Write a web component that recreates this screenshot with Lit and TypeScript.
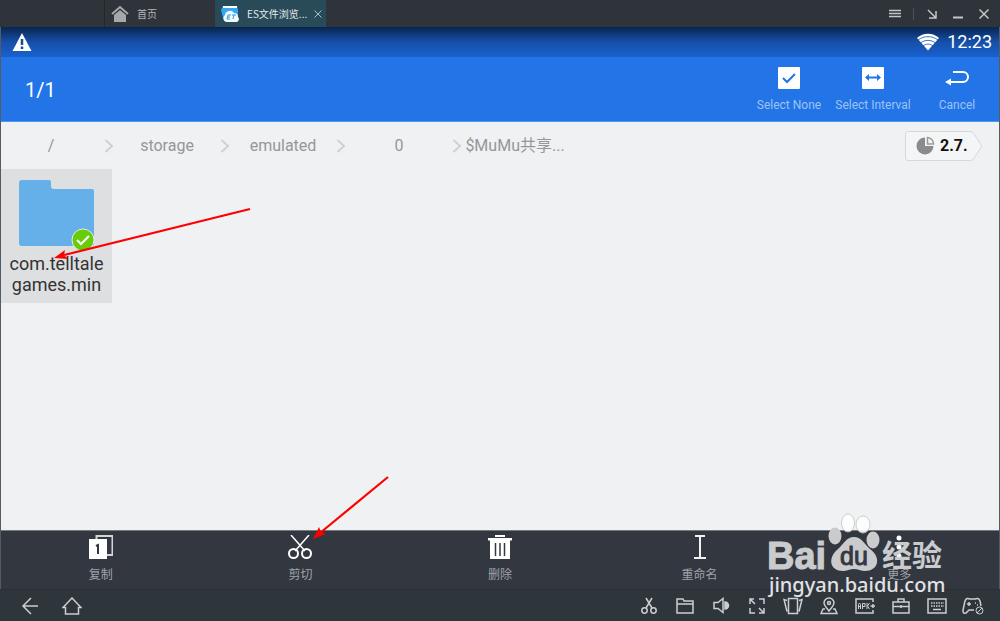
import { LitElement, html, svg, css } from "lit";
import { customElement } from "lit/decorators.js";

const glyphs = {
  home: svg`<path d="M1 9 9 2l8 7" fill="none" stroke="#a6a9ab" stroke-width="2"/><path d="M3 10 9 5l6 5v7H3z" fill="#a6a9ab"/>`,
  back: svg`<path d="M17 9H2M10 1 2 9l8 8"/>`,
  house: svg`<path d="M1 10.500 10 1l9 9.500h-2.500V17h-13v-6.500z"/>`,
  cut: svg`<path d="M5 1l6 10M11 1 5 11"/><circle cx="3.500" cy="13.500" r="2.700"/><circle cx="12.500" cy="13.500" r="2.700"/>`,
  folder: svg`<path d="M1 2h6l1 2h9v12H1zM1 7h16"/>`,
  sound: svg`<path d="M2 5.500h4l5-4v14l-5-4H2z"/><path d="M13 5a3.500 3.500 0 0 1 0 7z" fill="#ccced0"/>`,
  expand: svg`<path d="M2 7V2h4M2 2l5 5M11 2h5v5M2 11v5h5M16 11v5h-5M16 16l-5-5"/>`,
  shake: svg`<path d="M5.500 1.500h9v15h-9zM4 3.500 1 2.500l3 12M16 3.500l3-1-3 12"/>`,
  pin: svg`<path d="M9 14C6 10 4 8.500 4 6a5 5 0 0 1 10 0c0 2.500-2 4-5 8zM5 12H3l-2 4.500h16L15 12h-2"/><circle cx="9" cy="6" r="1.500"/>`,
  apk: svg`<path d="M18 5V2H1v14h17v-3M15.500 9H20M18 7v4"/><path stroke-width="1" d="M3.500 12V7.500l1-1.500 1 1.500V12M3.500 9.500h2M7.500 12V6.500h2.500v3H7.500M12 6v6M14.500 6 12.500 9l2 3"/>`,
  case: svg`<path d="M1 5h16v11H1zM6 5V2h6v3M1 9.500h16M9 8v3"/>`,
  keys: svg`<path d="M1 2h18v14H1z"/><path d="M4 6h13M4 9h13" stroke-dasharray="1.500 1"/><path d="M6 12.500h8"/>`,
  pad: svg`<path d="M12 13H7l-3 3c-3 1-3-1-3-3L3 4c1-3 3-3 5-2h5c2-1 4-1 5 2l1 5M5 7h4M7 5v4M13 6h1M15 8h1"/><circle cx="17.500" cy="13.500" r="3.500" stroke-width="1"/><path stroke-width="1" d="M15 16l5-5"/>`,
};

const icon = (name: keyof typeof glyphs, w = 18) =>
  html`<svg class="line" width=${w} height="18" viewBox="0 0 ${w} 18" aria-hidden="true">${glyphs[name]}</svg>`;

@customElement("window-bar")
class WindowBar extends LitElement {
  static styles = css`
    :host { display: flex; height: 27px; background: #2e343a; color: #b4b7ba; font: 10px/16px "Noto Sans CJK SC", sans-serif; }
    button { font: inherit; color: inherit; background: none; border: 0; padding: 0; display: flex; align-items: center; }
    .tabs { display: flex; margin-left: 104px; }
    .home { width: 111px; padding-left: 6px; gap: 8px; border-left: 1px solid #22272c; }
    .line { fill: none; }
    .active { display: flex; align-items: center; width: 111px; padding: 0 3px 0 6px; gap: 6px; background: #294b59; color: #e4eaed; box-sizing: border-box; }
    .name { flex: 1; white-space: nowrap; }
    .controls { display: flex; align-items: center; margin-left: auto; padding-right: 10px; gap: 14px; }
    .rule { width: 1px; height: 12px; background: #4b5157; margin: 0 -2px; }
    svg { display: block; flex: none; }
  `;
  render() {
    return html`
      <nav class="tabs">
        <button class="home">${icon("home")}<span>首页</span></button>
        <div class="active">
          <svg width="20" height="18" viewBox="0 0 20 18" aria-hidden="true">
            <path d="M2 1h14l1 4v11H3L0 5z" fill="#35a8f4"/><path d="M2 1h14v2H2z" fill="#fff"/>
            <path d="M5 17a4 4 0 0 1-1-7 5 5 0 0 1 9-2 4 4 0 0 1 4 4 3 3 0 0 1-1 5z" fill="#f3f8fb"/>
            <path d="M10 10H7l-1 4h3M7 12h2M11 10h4M13 10l-1 4" fill="none" stroke="#299de9"/>
          </svg>
          <span class="name">ES文件浏览...</span>
          <button aria-label="Close tab"><svg width="10" height="10" viewBox="0 0 10 10"><path d="M1.500 1.500l7 7M8.500 1.500l-7 7" stroke="#b2bdc2" fill="none"/></svg></button>
        </div>
      </nav>
      <div class="controls">
        <button aria-label="Menu"><svg width="12" height="12" viewBox="0 0 12 12"><path d="M0 2.500h12M0 5.500h12M0 8.500h12" stroke="#c4c6c8" stroke-width="1.500"/></svg></button>
        <span class="rule"></span>
        <button aria-label="Dock"><svg width="12" height="12" viewBox="0 0 12 12"><path d="M2 2l8 8M10 3v7H3" stroke="#c4c6c8" stroke-width="1.500" fill="none"/></svg></button>
        <button aria-label="Minimize"><svg width="12" height="12" viewBox="0 0 12 12"><path d="M1 9.500h10" stroke="#c4c6c8" stroke-width="2"/></svg></button>
        <button aria-label="Close"><svg width="12" height="12" viewBox="0 0 12 12"><path d="M1.500 1.500l9 9M10.500 1.500l-9 9" stroke="#c4c6c8" stroke-width="1.500"/></svg></button>
      </div>`;
  }
}

@customElement("file-header")
class FileHeader extends LitElement {
  static styles = css`
    :host { display: block; color: #fff; font-family: Roboto, sans-serif; }
    .status { display: flex; align-items: center; height: 30px; padding: 0 7px 0 11px; gap: 8px; background: linear-gradient(#08244f, #1650a8 50%, #1861cf); }
    .time { font-size: 18px; line-height: 30px; }
    .wifi { margin-left: auto; }
    .bar { display: flex; align-items: center; height: 64px; background: #2374e7; border-bottom: 1px solid #4b97f4; }
    .count { flex: 1; padding: 2px 0 0 24px; font-size: 20px; line-height: 32px; }
    button { width: 84px; padding: 1px 0 0; border: 0; background: none; color: #9dc3f7; font: 12px/16px Roboto, sans-serif; white-space: nowrap; display: flex; flex-direction: column; align-items: center; gap: 8px; }
  `;
  render() {
    return html`
      <div class="status">
        <svg width="20" height="18" viewBox="0 0 20 18" aria-hidden="true"><path d="M10 0 19.500 18H.5z" fill="#fff"/><path d="M10 6v6M10 13.500v2.500" stroke="#174a98" stroke-width="2.500"/></svg>
        <svg class="wifi" width="22" height="18" viewBox="0 0 22 18" aria-hidden="true"><path d="M0 5C6-.7 16-.7 22 5L11 17.500z" fill="#fff"/><path d="M1 7c6-4.500 14-4.500 20 0M3.500 10c4.500-3.500 10.500-3.500 15 0M6 13c3-2.500 7-2.500 10 0" fill="none" stroke="#1650a8" stroke-width=".8"/></svg>
        <time class="time">12:23</time>
      </div>
      <div class="bar">
        <span class="count">1/1</span>
        <button><svg width="22" height="22" viewBox="0 0 22 22" aria-hidden="true"><rect width="22" height="22" rx="1" fill="#fff"/><path d="M5 11l4 4 8-8" fill="none" stroke="#2374e7" stroke-width="2"/></svg>Select None</button>
        <button><svg width="22" height="22" viewBox="0 0 22 22" aria-hidden="true"><rect width="22" height="22" rx="1" fill="#fff"/><path d="M6 10.500h10" stroke="#2374e7" stroke-width="2"/><path d="M7 7v7l-4-3.500zM15 7v7l4-3.500z" fill="#2374e7"/></svg>Select Interval</button>
        <button><svg width="24" height="22" viewBox="0 0 24 22" aria-hidden="true"><path d="M8 5h10a5 5 0 0 1 0 10H5" fill="none" stroke="#fff" stroke-width="2"/><path d="M6 11.500v7L0 15z" fill="#fff"/></svg>Cancel</button>
      </div>`;
  }
}

@customElement("path-bar")
class PathBar extends LitElement {
  static styles = css`
    :host { display: flex; align-items: center; height: 47px; font-family: Roboto, "Noto Sans CJK SC", sans-serif; }
    .path { display: flex; align-items: center; flex: 1; }
    a { width: 100px; text-align: center; color: #95979a; font-size: 16px; line-height: 24px; text-decoration: none; white-space: nowrap; }
    .sep { display: block; }
    .usage { position: relative; z-index: 0; display: flex; align-items: center; gap: 5px; width: 77px; height: 30px; margin-right: 17px; padding: 0 0 0 11px; border: 0; background: none; color: #111; font: bold 16px/24px Roboto, sans-serif; }
    .shape { position: absolute; inset: 0; z-index: -1; }
  `;
  render() {
    const parts = ["/", "storage", "emulated", "0", "$MuMu共享..."];
    return html`
      <nav class="path">
        ${parts.map((p, i) => html`${i ? html`<svg class="sep" width="16" height="16" viewBox="0 0 16 16" aria-hidden="true"><path d="M4.500 2l6.500 6-6.500 6" fill="none" stroke="#cfd1d3" stroke-width="2"/></svg>` : null}<a href="#">${p}</a>`)}
      </nav>
      <button class="usage">
        <svg class="shape" width="77" height="30" viewBox="0 0 77 30" aria-hidden="true"><path d="M3 .5h62q2 0 3 1l8 12q1 1.500 0 3l-8 12q-1 1-3 1H3Q.5 29.500.5 27V3Q.5.5 3 .5z" fill="#f4f5f6" stroke="#d6d8da"/></svg>
        <svg width="19" height="19" viewBox="0 0 19 19" aria-hidden="true"><path d="M9 1.500A8.500 8.500 0 1 0 17.500 10H9z" fill="#8b8b8b"/><path d="M11.500 1.500A6.500 6.500 0 0 1 17.500 8h-6z" fill="none" stroke="#999" stroke-width="1.500"/></svg>
        2.7.
      </button>`;
  }
}

@customElement("action-bar")
class ActionBar extends LitElement {
  static styles = css`
    :host { display: flex; height: 58px; background: #333740; border-top: 1px solid #777b80; }
    button { flex: 1; display: flex; flex-direction: column; align-items: center; gap: 7px; padding: 4px 0 0; border: 0; background: none; color: #a0a3a8; font: 12px/16px "Noto Sans CJK SC", sans-serif; }
  `;
  render() {
    const items = [
      { label: "复制", art: svg`<path d="M7.500 4V1h16v19H18" fill="none" stroke="#d3d5d7" stroke-width="2"/><path d="M0 4h18v20H0z" fill="#fff"/><path d="M7 11l2-1v9" fill="none" stroke="#333740" stroke-width="2"/>` },
      { label: "剪切", art: svg`<path d="M3 0l14 16M21 0 7 16" fill="none" stroke="#fff" stroke-width="1.500"/><g fill="none" stroke="#fff" stroke-width="2"><circle cx="5.500" cy="18.500" r="4.500"/><circle cx="18.500" cy="18.500" r="4.500"/></g>` },
      { label: "删除", art: svg`<path d="M7 0h10v2H7zM0 3h24v2.500h-2V24H2V5.500H0z" fill="#fff"/><path d="M7.500 8v13M12 8v13M16.500 8v13" stroke="#333740" stroke-width="1.500"/>` },
      { label: "重命名", art: svg`<path d="M7 1h10M12 1v22M6 23h12" stroke="#f2f2f2" stroke-width="2"/>` },
      { label: "更多", art: svg`<g fill="#fff"><circle cx="12" cy="3" r="2.500"/><circle cx="12" cy="12" r="2.500"/><circle cx="12" cy="21" r="2.500"/></g>` },
    ];
    return items.map((i) => html`<button><svg width="24" height="24" viewBox="0 0 24 24" aria-hidden="true">${i.art}</svg>${i.label}</button>`);
  }
}

@customElement("emulator-bar")
class EmulatorBar extends LitElement {
  static styles = css`
    :host { display: flex; align-items: center; justify-content: space-between; height: 32px; padding: 0 16px 0 19px; background: #2e353b; box-sizing: border-box; border-top: 1px solid #2a3036; }
    div { display: flex; align-items: center; }
    .nav { gap: 20px; }
    button { display: flex; justify-content: center; width: 22px; padding: 0; border: 0; background: none; }
    .tools { gap: 14px; }
    .line { fill: none; stroke: #ccced0; stroke-width: 1.5; }
  `;
  render() {
    const tools = [["cut", 16], ["folder", 18], ["sound", 18], ["expand", 18], ["shake", 20], ["pin", 18], ["apk", 20], ["case", 18], ["keys", 20], ["pad", 22]] as const;
    return html`
      <div class="nav"><button aria-label="Back">${icon("back")}</button><button aria-label="Home">${icon("house", 20)}</button></div>
      <div class="tools">${tools.map(([n, w]) => html`<button aria-label=${n}>${icon(n, w)}</button>`)}</div>`;
  }
}

@customElement("app-root")
class AppRoot extends LitElement {
  static styles = css`
    :host { display: flex; flex-direction: column; min-height: 100vh; position: relative; background: #2e343a; }
    .screen { display: flex; flex-direction: column; flex: 1; border: solid #555b62; border-width: 0 1px; background: #f0f1f3; }
    .files { flex: 1; display: flex; align-items: flex-start; }
    .file { display: flex; flex-direction: column; align-items: center; width: 111px; height: 134px; padding: 9px 0 0; gap: 2px; border: 0; background: #dedfe1; color: #333; font: 18px/21px Roboto, sans-serif; }
    .file svg { display: block; }
    .arrows, .mark { position: absolute; pointer-events: none; }
    .arrows { left: 0; top: 0; }
    .mark { right: 50px; bottom: 18px; }
    .brand { font-family: "Liberation Sans", sans-serif; font-weight: bold; font-size: 38px; stroke: #c9cbcd; }
    .du { font-family: "Liberation Sans", sans-serif; font-size: 25px; fill: #343840; stroke: #343840; }
    .cn { font-family: "Noto Sans CJK SC", sans-serif; font-weight: bold; font-size: 30px; }
    .site { font-family: "Noto Sans", sans-serif; font-size: 20px; font-weight: 500; fill: #e1e3e4; }
  `;
  render() {
    return html`
      <window-bar></window-bar>
      <main class="screen">
        <file-header></file-header>
        <path-bar></path-bar>
        <section class="files">
          <button class="file">
            <svg width="78" height="73" viewBox="0 0 78 73" aria-hidden="true">
              <path d="M4 2h27q2 0 2 2v4q0 3 3 3h38q2 0 2 2v52q0 3-3 3H4q-3 0-3-3V5q0-3 3-3z" fill="#65b0e8"/>
              <circle cx="65" cy="62" r="11" fill="#68cc08" stroke="#e4edf0" stroke-width="1"/>
              <path d="M59 62l4 4 8-8" fill="none" stroke="#fff" stroke-width="2"/>
            </svg>
            <span>com.telltale<br />games.min</span>
          </button>
        </section>
        <action-bar></action-bar>
      </main>
      <emulator-bar></emulator-bar>
      <svg class="arrows" width="400" height="550" viewBox="0 0 400 550" aria-hidden="true">
        <g stroke="#f00" stroke-width="2.200"><path d="M250 209 64 255M388 477l-68 56"/></g>
        <path d="M54 258l11-8-1 5 4 4zM313 539l6-12 2 5 5 2z" fill="#f00"/>
      </svg>
      <svg class="mark" width="186" height="92" viewBox="0 0 186 92">
        <g fill="#fff" stroke="#c8cacc" opacity=".9">
          <ellipse cx="84" cy="12" rx="6.500" ry="9"/><ellipse cx="99" cy="13.500" rx="7" ry="8.500"/>
        </g>
        <g fill="#c9cbcd">
          <ellipse cx="71" cy="25" rx="6.500" ry="8.500"/><ellipse cx="109" cy="29" rx="6.500" ry="8.500"/>
          <path d="M90 26c8 0 10 7 16 12 12 9 8 22-5 22-4 0-7-2-11-2s-7 2-11 2c-13 0-16-13-5-22 6-5 8-12 16-12z"/>
          <text class="brand" x="3" y="58">Bai</text>
          <text class="cn" x="118" y="55">经验</text>
          <text class="site" x="5" y="81">jingyan.baidu.com</text>
        </g>
        <text class="du" x="76" y="54">du</text>
      </svg>`;
  }
}
